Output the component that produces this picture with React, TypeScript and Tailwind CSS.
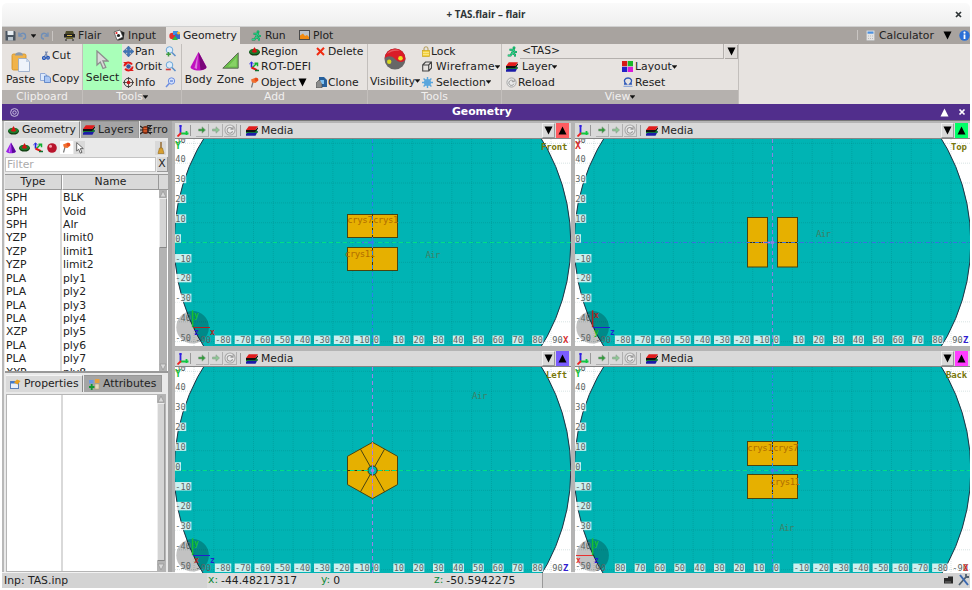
import React from "react";

type Kids = { children?: React.ReactNode };

/* ---------- icons ---------- */

function Svg({ w, h, vb, children }: Kids & { w: number; h: number; vb?: string }) {
  return (
    <svg width={w} height={h} viewBox={vb ?? `0 0 ${w} ${h}`} className="block shrink-0">
      {children}
    </svg>
  );
}

const Save = () => (
  <Svg w={11} h={11}>
    <path d="M.5 1h9l1 1v8.500h-10z" fill="#4a5560" />
    <rect x="2.500" y="1" width="6" height="4" fill="#e8eef2" />
    <rect x="3" y="7" width="5" height="3.500" fill="#b9c4cc" />
  </Svg>
);
const Undo = ({ flip = false }: { flip?: boolean }) => (
  <Svg w={9} h={9}>
    <g transform={flip ? "translate(9 0) scale(-1 1)" : undefined} fill="none" stroke="#6f8fb8" strokeWidth="1.400">
      <path d="M1.500 4.500C3 1.500 7 1.500 7.500 4.500S6 8 5 8" />
      <path d="M1 1.500v3.500h3.500" />
    </g>
  </Svg>
);
const Caret = () => (
  <Svg w={5} h={4}>
    <path d="M0 .5h5L2.500 3.500z" fill="#111" stroke="#111" strokeWidth=".4" />
  </Svg>
);
const Tri = ({ up = false, color = "#000" }: { up?: boolean; color?: string }) => (
  <Svg w={9} h={9}>
    <path d={up ? "M4.500 .5L8.500 8.500H.5z" : "M.5 .5h8L4.500 8.500z"} fill={color} />
  </Svg>
);
const FlairIcon = () => (
  <Svg w={11} h={11}>
    <path d="M2 1h7l1 3H1z" fill="#4d4a2a" />
    <rect x="0" y="4" width="11" height="3.500" fill="#222" />
    <rect x="2" y="7" width="7" height="2" fill="#6b6632" />
    <path d="M2 9v2M9 9v2" stroke="#222" />
    <path d="M3 5.500h5" stroke="#d8b84a" />
  </Svg>
);
const InputIcon = () => (
  <Svg w={12} h={12}>
    <path d="M8 2l3.500 1.500-1 7-6 1" fill="#222" />
    <path d="M1 3l6-2 3 7-6 3z" fill="#fff" stroke="#444" strokeWidth=".7" />
    <circle cx="3.500" cy="4" r="1.100" fill="#e02020" />
    <circle cx="5.500" cy="6.500" r="1.600" fill="#222" />
  </Svg>
);
const GeoIcon = () => (
  <Svg w={12} h={11}>
    <circle cx="3.500" cy="6" r="3.200" fill="#e23030" />
    <path d="M4 1h5v4H4z" fill="#3b8fe8" />
    <path d="M6 4h5v5H6z" fill="#3a67c8" />
    <path d="M3 10l3-4 3 4z" fill="#2fbf3a" />
    <circle cx="9.500" cy="3" r="1.500" fill="#f4b62c" />
  </Svg>
);
const RunIcon = () => (
  <Svg w={11} h={11}>
    <circle cx="7" cy="1.800" r="1.500" fill="#17b56c" />
    <path d="M2.500 3.800h4L5 7l3 1.500v2M5 7L3.500 9.500H.8M6.500 4l1.500 2h2" fill="none" stroke="#128a52" strokeWidth="2" />
    <path d="M2.500 3.800h4L5 7l3 1.500v2M5 7L3.500 9.500H.8M6.500 4l1.500 2h2" fill="none" stroke="#2bd488" strokeWidth="1.100" />
  </Svg>
);
const PlotIcon = () => (
  <Svg w={11} h={10}>
    <rect x=".5" y=".5" width="10" height="9" fill="#b9c2cb" stroke="#4a4a4a" />
    <path d="M1 9V5.500l3-2 2 2.500 2-1 2 2V9z" fill="#f08a10" />
  </Svg>
);
const CalcIcon = () => (
  <Svg w={9} h={11}>
    <rect x=".5" y=".5" width="8" height="10" rx="1" fill="#e4e4e4" stroke="#bcbcbc" />
    <rect x="1.500" y="1.500" width="6" height="2.200" fill="#4a90e0" />
    <path d="M2 6h5M2 8.500h5" stroke="#bbb" strokeDasharray="1 1" />
  </Svg>
);
const InfoBall = () => (
  <Svg w={11} h={11}>
    <circle cx="5.500" cy="5.500" r="5.200" fill="#2b6fd6" />
    <path d="M5.500 4.500v4.500" stroke="#fff" strokeWidth="1.800" />
    <circle cx="5.500" cy="2.700" r="1.100" fill="#fff" />
  </Svg>
);
const PasteIcon = () => (
  <Svg w={19} h={21}>
    <rect x="1" y="3" width="14" height="16" rx="1.500" fill="#f0b34a" stroke="#d08e20" strokeWidth=".8" />
    <path d="M4 4.500c0-4.500 8-4.500 8 0z" fill="#8a99ab" />
    <path d="M7.500 7.500h8L18.500 11v9.500h-11z" fill="#eef3fa" stroke="#8fa6c6" strokeWidth=".8" />
    <path d="M15 7.500V11h3.500" fill="#c3d2e8" />
  </Svg>
);
const CutIcon = () => (
  <Svg w={8} h={9}>
    <path d="M2 6L5.500 .5M5.500 6.500L3.500 .5" stroke="#7a8cb0" strokeWidth="1.300" />
    <circle cx="2" cy="7" r="1.400" fill="none" stroke="#2456b8" strokeWidth="1.400" />
    <circle cx="6" cy="6.800" r="1.300" fill="none" stroke="#2456b8" strokeWidth="1.400" />
  </Svg>
);
const CopyIcon = () => (
  <Svg w={11} h={10}>
    <path d="M.5 .5h4.500l1.500 1.500v5.500h-6z" fill="#dbe8fb" stroke="#7c9bd0" strokeWidth=".8" />
    <path d="M4.500 3h4l2 2v4.500h-6z" fill="#a9c6f4" stroke="#4f78c0" strokeWidth=".8" />
  </Svg>
);
const Cursor = ({ w = 13, h = 20, fill = "#d9d9d9", stroke = "#8d8d8d" }: { w?: number; h?: number; fill?: string; stroke?: string }) => (
  <Svg w={w} h={h} vb="0 0 13 20">
    <path d="M1 1v14l3.300-3 2.700 6.500 2.800-1.200L7 11h5z" fill={fill} stroke={stroke} strokeWidth="1.300" />
  </Svg>
);
const PanIcon = () => (
  <Svg w={11} h={11}>
    <path d="M5.500 0L8 2.800H6.500v1.700h1.700V3L11 5.500 8.200 8V6.500H6.500v1.700H8L5.500 11 3 8.200h1.500V6.500H2.800V8L0 5.500 2.800 3v1.500h1.700V2.800H3z" fill="#3f74b8" stroke="#24518c" strokeWidth=".4" />
  </Svg>
);
const OrbitIcon = () => (
  <Svg w={11} h={11}>
    <circle cx="5.500" cy="5.500" r="4" fill="none" stroke="#e01818" strokeWidth="2" strokeDasharray="10 2.500" />
    <circle cx="5.500" cy="5.500" r="2.200" fill="#34539c" />
    <path d="M0 1h4v3zM11 10H7V7z" fill="#e01818" />
  </Svg>
);
const InfoIcon = () => (
  <Svg w={11} h={11}>
    <circle cx="5.500" cy="5.500" r="4.300" fill="none" stroke="#333" strokeWidth="1" />
    <path d="M5.500 0v11M0 5.500h11" stroke="#333" strokeWidth=".8" />
    <circle cx="5.500" cy="5.500" r="1.800" fill="#c01818" />
  </Svg>
);
const Mag = ({ mark }: { mark: "plus" | "minus" | "fit" }) => (
  <Svg w={11} h={11}>
    {mark === "fit" ? (
      <>
        <circle cx="6.500" cy="4" r="3.200" fill="#d4e1fb" stroke="#6d8ee0" />
        <path d="M4.200 6.500L1 10M5 4h3" stroke="#6d8ee0" strokeWidth="1.500" />
      </>
    ) : (
      <>
        <circle cx="4.500" cy="4" r="3.300" fill="#dcecfb" stroke="#6ba6d8" />
        <path d="M7 6.500l3.500 3.500" stroke="#5a8ec8" strokeWidth="1.500" />
        {mark === "plus" ? (
          <path d="M3.500 6v4.500M1.200 8.300h4.600" stroke="#3f9a3f" strokeWidth="1.500" />
        ) : (
          <path d="M.8 8.500h5" stroke="#d04040" strokeWidth="1.600" />
        )}
      </>
    )}
  </Svg>
);
const Cone = ({ w, h, a, b }: { w: number; h: number; a: string; b: string }) => (
  <Svg w={w} h={h} vb="0 0 17 19">
    <path d="M8.500 0L.5 15c0 4.600 16 4.600 16 0z" fill={a} />
    <path d="M8.500 0l2 18c3.500-.3 6-1.300 6-3z" fill={b} />
    <path d="M8 2L4.500 16l2.500 1z" fill="#fff" opacity=".45" />
  </Svg>
);
const ZoneIcon = () => (
  <Svg w={17} h={17}>
    <path d="M.8 16.200L16.200 .8v15.400z" fill="#6cc04a" stroke="#5d6b57" strokeWidth="1" />
    <path d="M6 14.500l8.500-9v9z" fill="#9ade78" opacity=".6" />
  </Svg>
);
const RegionIcon = ({ w = 11 }: { w?: number }) => (
  <Svg w={w} h={9} vb="0 0 11 9">
    <ellipse cx="5.500" cy="5.300" rx="5.400" ry="3.300" fill="#123f12" />
    <ellipse cx="5.500" cy="4.500" rx="5.200" ry="2.800" fill="#1d7a2c" />
    <path d="M5.500 0L3 4.500c0 1.500 5 1.500 5 0z" fill="#d21414" />
  </Svg>
);
const RotIcon = () => (
  <Svg w={11} h={11}>
    <path d="M2.500 1v5.500" stroke="#2020e0" strokeWidth="1.600" />
    <path d="M3.500 6.500l4-4M5.500 2.200h3v3" stroke="#10b030" strokeWidth="1.500" fill="none" />
    <path d="M2.500 6.500L8 9.200" stroke="#e01818" strokeWidth="2" />
    <path d="M.3 3l2.200-2L4.700 3" stroke="#4040e0" fill="none" />
    <path d="M6 9.500h4" stroke="#107030" strokeWidth="1.500" />
  </Svg>
);
const PinIcon = () => (
  <Svg w={9} h={11}>
    <path d="M3 5L1.500 10.500" stroke="#777" strokeWidth="1.200" />
    <path d="M1 2.500l5-2 2.500 3-3 2.500L2 5.500z" fill="#f07030" />
    <circle cx="6.500" cy="2.500" r="1.800" fill="#e84a1a" />
  </Svg>
);
const DeleteIcon = () => (
  <Svg w={9} h={9}>
    <path d="M1 1l7 7M8 .8L1 8" stroke="#f02a10" strokeWidth="2" />
  </Svg>
);
const CloneIcon = () => (
  <Svg w={11} h={11}>
    <path d="M3 0h5l3 3v7H3z" fill="#27609c" />
    <path d="M0 6l3-3 3 1.500V11H0z" fill="#8b8b8b" stroke="#444" strokeWidth=".6" />
    <path d="M4 3h4v4H6z" fill="#7fc0f0" />
  </Svg>
);
const SphereYY = () => (
  <Svg w={22} h={22}>
    <circle cx="11" cy="11" r="10.500" fill="#676767" />
    <path d="M.5 11a10.500 10.500 0 0 1 21 0c-1.500 4-7 4-10.500 0S2 8 .5 11z" fill="#da1c28" />
    <path d="M3 6c2-4 8-6 13-3-4-1-9 0-13 3z" fill="#f59a9a" opacity=".5" />
    <circle cx="16.500" cy="10.300" r="2.300" fill="#f0e020" />
    <circle cx="5.200" cy="13.800" r="2.200" fill="#d8d820" />
  </Svg>
);
const LockIcon = () => (
  <Svg w={8} h={11}>
    <path d="M2 5V3c0-3 4-3 4 0v2" fill="none" stroke="#b9a56a" strokeWidth="1.200" />
    <rect x=".5" y="4.500" width="7" height="6" fill="#f4d23c" stroke="#caa520" strokeWidth=".7" />
    <path d="M1 6.500h6M1 8.500h6" stroke="#fbeea0" strokeWidth=".7" />
  </Svg>
);
const WireIcon = () => (
  <Svg w={10} h={11}>
    <path d="M.7 4h6v6h-6zM.7 4L3.500 1h6L6.700 4M9.500 1v6l-2.800 3" fill="none" stroke="#444" strokeWidth="1.100" />
  </Svg>
);
const SelIcon = () => (
  <Svg w={11} h={11}>
    <circle cx="5.500" cy="5.500" r="3.600" fill="#5eacdf" />
    <path d="M5.500 0v11M0 5.500h11M1.600 1.600l7.800 7.800M9.400 1.600L1.600 9.400" stroke="#5aa5dc" strokeWidth="1.400" />
  </Svg>
);
const LayersIcon = () => (
  <Svg w={12} h={10}>
    <path d="M2.500 5h9.500L9.500 9.800H0V8z" fill="#1c1ca8" />
    <path d="M2 6.800h10l-1.500-3H2L0 5.500v2z" fill="#0f8a20" />
    <path d="M0 4h9l3-2.800v1.600L9 6H0z" fill="#111" />
    <path d="M2.800 .3H12L9.300 4H0z" fill="#e01c1c" />
  </Svg>
);
const LayoutIcon = () => (
  <Svg w={11} h={11}>
    <rect width="5.200" height="5.200" fill="#d81818" />
    <rect x="5.800" width="5.200" height="5.200" fill="#18b828" />
    <rect y="5.800" width="5.200" height="5.200" fill="#2020c8" />
    <rect x="5.800" y="5.800" width="5.200" height="5.200" fill="#d818d8" />
  </Svg>
);
const ReloadIcon = ({ w = 11 }: { w?: number }) => (
  <Svg w={w} h={w} vb="0 0 11 11">
    <circle cx="5.500" cy="5.500" r="4.600" fill="#e9e9e9" stroke="#a8a8a8" strokeWidth="1" />
    <path d="M7.500 4.200A2.600 2.600 0 1 0 7.900 6.700M8.300 2.300V4.700H5.900" fill="none" stroke="#999" strokeWidth="1" />
  </Svg>
);
const ResetIcon = () => (
  <Svg w={10} h={10}>
    <path d="M1 7h2.200C-.5 3.500 2.500 1 5 1s5.500 2.500 1.800 6H9" fill="none" stroke="#2c57b8" strokeWidth="1.300" />
    <path d="M.5 9.300h9" stroke="#7e9bd8" strokeWidth="1" />
  </Svg>
);
const AxesIcon = () => (
  <Svg w={12} h={12}>
    <path d="M3.500 0v8" stroke="#3020e0" strokeWidth="1.800" />
    <path d="M3 8.500h8.500M9.500 6v4" stroke="#10c840" strokeWidth="1.800" />
    <path d="M4 8L.5 11.500" stroke="#f02020" strokeWidth="1.800" />
    <path d="M2 1h3" stroke="#3020e0" />
  </Svg>
);
const Arrow = ({ color }: { color: string }) => (
  <Svg w={8} h={8}>
    <path d="M.5 3h3.500V.8L7.500 4 4 7.200V5H.5z" fill={color} stroke="#8f9f8f" strokeWidth=".6" />
  </Svg>
);
const BallIcon = () => (
  <Svg w={10} h={10}>
    <circle cx="5" cy="5" r="4.800" fill="#b8142c" />
    <circle cx="3.500" cy="3.200" r="1.500" fill="#f3a0ac" />
  </Svg>
);
const Broom = () => (
  <Svg w={8} h={12}>
    <path d="M4 0v6" stroke="#8a5a18" strokeWidth="1.300" />
    <path d="M2.500 6h3L7 11.500H1z" fill="#d8a030" stroke="#96691a" strokeWidth=".6" />
  </Svg>
);
const ErrIcon = () => (
  <Svg w={11} h={10}>
    <ellipse cx="5.500" cy="5" rx="3.400" ry="4" fill="#7b2f14" />
    <path d="M0 1l3 2M0 5h3M0 9l3-2M11 1L8 3M11 5H8M11 9L8 7" stroke="#222" strokeWidth="1.200" />
    <path d="M3.500 3.500h4M3.500 6h4" stroke="#e8602a" strokeWidth="1.500" />
  </Svg>
);
const PropIcon = () => (
  <Svg w={11} h={10}>
    <rect x=".5" y="2.500" width="8" height="7" fill="#e8f0fa" stroke="#5a7fb8" />
    <path d="M1 3.500h7" stroke="#3a78d0" strokeWidth="2" />
    <path d="M4 3.500L7 .5l3.500 1.500-3 3.500z" fill="#e8a020" />
  </Svg>
);
const AttrIcon = () => (
  <Svg w={11} h={11}>
    <rect x="0" y="1" width="4.500" height="3.500" fill="#6e9ae0" />
    <rect x="6" y="0" width="4.500" height="4" fill="#e8a040" />
    <rect x="6" y="5" width="4" height="5" fill="#e4d8c0" stroke="#b89a60" strokeWidth=".5" />
    <path d="M2.700 5v6M0 8h5.400" stroke="#129a30" strokeWidth="1.800" />
  </Svg>
);

/* ---------- ribbon ---------- */

function Label({ children }: Kids) {
  return <span className="pt-[1.500px] leading-none whitespace-pre">{children}</span>;
}

function Group({ title, caret, width, children }: Kids & { title: string; caret?: boolean; width: string }) {
  return (
    <div className={`flex shrink-0 flex-col border-r border-[#c3bfbc] ${width}`}>
      <div className="flex h-[46px]">{children}</div>
      <div className="flex h-[14px] items-center justify-center bg-[#b5b1ae] text-[#f1efee]">
        <Label>{title}</Label>
        {caret && <Caret />}
      </div>
    </div>
  );
}

function Item({ icon, text, caret, slot, h = "h-[15.500px]" }: { icon: React.ReactNode; text: React.ReactNode; caret?: boolean; slot: string; h?: string }) {
  return (
    <div className={`flex items-center ${h}`}>
      <div className={`flex shrink-0 items-center ${slot}`}>{icon}</div>
      <Label>{text}</Label>
      {caret && <Caret />}
    </div>
  );
}

function MenuBar() {
  return (
    <div className="flex h-[17px] items-center bg-[#a8a39f]">
      <div className="flex w-[52px] items-center pl-[3px]">
        <Save />
        <div className="ml-[2px] flex items-center gap-[4px]">
          <Undo />
          <Caret />
          <Undo flip />
        </div>
        <div className="ml-[3px] h-[10px] w-px bg-[#c9c5c2]" />
      </div>
      <div className="flex w-[49px] items-center gap-[3px] pl-[10px]"><FlairIcon /><Label>Flair</Label></div>
      <div className="flex w-[63px] items-center gap-[3px] pl-[10px]"><InputIcon /><Label>Input</Label></div>
      <div className="flex h-full w-[74px] items-center gap-[2px] bg-[#e7e3e0] pl-[3px]"><GeoIcon /><Label>Geometry</Label></div>
      <div className="flex w-[48px] items-center gap-[3px] pl-[11px]"><RunIcon /><Label>Run</Label></div>
      <div className="flex w-[60px] items-center gap-[3px] pl-[11px]"><PlotIcon /><Label>Plot</Label></div>
      <div className="ml-auto flex items-center">
        <div className="mr-[8px] h-[10px] w-px bg-[#c9c5c2]" />
        <CalcIcon />
        <div className="ml-[4px] flex w-[64px]"><Label>Calculator</Label></div>
        <Tri />
        <div className="ml-[7px]"><InfoBall /></div>
      </div>
    </div>
  );
}

function Ribbon() {
  return (
    <div className="flex h-[60px] bg-[#e7e3e0]">
      <Group title="Clipboard" width="w-[81px]">
        <div className="flex w-[37px] flex-col items-center pt-[7px]">
          <PasteIcon />
          <div className="mt-[1px] flex"><Label>Paste</Label></div>
        </div>
        <div className="flex flex-col pl-[1px]">
          <Item icon={<div className="pl-[2px]"><CutIcon /></div>} text="Cut" slot="w-[12px]" h="h-[23px]" />
          <Item icon={<CopyIcon />} text="Copy" slot="w-[12px]" h="h-[24px]" />
        </div>
      </Group>
      <Group title="Tools" caret width="w-[99px]">
        <div className="flex w-[39px] flex-col items-center bg-[#a9ffb9] pt-[6px]">
          <Cursor />
          <div className="mt-[1px] flex"><Label>Select</Label></div>
        </div>
        <div className="flex w-[43px] flex-col pl-[1px]">
          <Item icon={<PanIcon />} text="Pan" slot="w-[12px]" />
          <Item icon={<OrbitIcon />} text="Orbit" slot="w-[12px]" />
          <Item icon={<InfoIcon />} text="Info" slot="w-[12px]" />
        </div>
        <div className="flex flex-col justify-around">
          <Mag mark="plus" />
          <Mag mark="minus" />
          <Mag mark="fit" />
        </div>
      </Group>
      <Group title="Add" width="w-[186px]">
        <div className="flex w-[33px] flex-col items-center pt-[8px]">
          <Cone w={17} h={19} a="#c010c0" b="#7a067a" />
          <div className="mt-[2px] flex"><Label>Body</Label></div>
        </div>
        <div className="flex w-[31px] flex-col items-center pt-[8px]">
          <ZoneIcon />
          <div className="mt-[4px] flex"><Label>Zone</Label></div>
        </div>
        <div className="flex w-[69px] flex-col pl-[3px]">
          <Item icon={<RegionIcon />} text="Region" slot="w-[12px]" />
          <Item icon={<RotIcon />} text="ROT-DEFI" slot="w-[12px]" />
          <div className="flex items-center gap-[2px]">
            <Item icon={<div className="pl-[1px]"><PinIcon /></div>} text="Object" slot="w-[12px]" />
            <Tri />
          </div>
        </div>
        <div className="flex flex-col pl-[1px]">
          <Item icon={<DeleteIcon />} text="Delete" slot="w-[12px]" />
          <div className="h-[15.500px]" />
          <Item icon={<CloneIcon />} text="Clone" slot="w-[12px]" />
        </div>
      </Group>
      <Group title="Tools" width="w-[134px]">
        <div className="flex w-[54px] flex-col items-center pt-[4px]">
          <SphereYY />
          <div className="mt-[5px] flex items-center"><Label>Visibility</Label><Caret /></div>
        </div>
        <div className="flex flex-col">
          <Item icon={<LockIcon />} text="Lock" slot="w-[9px]" />
          <Item icon={<WireIcon />} text={<span className="tracking-[0.300px]">Wireframe</span>} caret slot="w-[14px]" />
          <Item icon={<SelIcon />} text="Selection" caret slot="w-[14px]" />
        </div>
      </Group>
      <Group title="View" caret width="w-[237px]">
        <div className="flex w-full flex-col pl-[4px]">
          <div className="flex h-[15.500px] items-center">
            <div className="w-[14px] pl-[1px]"><RunIcon /></div>
            <div className="flex h-[15px] grow items-center border-r border-b border-[#b4b0ad] pl-[2px]"><Label>&lt;TAS&gt;</Label></div>
            <div className="ml-[1px] flex h-[14px] w-[13px] items-center justify-center border-r border-b border-[#aaa6a3] bg-[#e0dcd9]"><Tri /></div>
          </div>
          <div className="flex">
            <div className="w-[116px]"><Item icon={<LayersIcon />} text="Layer" caret slot="w-[16px]" /></div>
            <Item icon={<LayoutIcon />} text="Layout" caret slot="w-[13px]" />
          </div>
          <div className="flex">
            <div className="w-[117px]"><Item icon={<ReloadIcon />} text="Reload" slot="w-[12px]" /></div>
            <Item icon={<ResetIcon />} text="Reset" slot="w-[12px]" />
          </div>
        </div>
      </Group>
    </div>
  );
}

/* ---------- left panel ---------- */

const bodies: [string, string][] = [
  ["SPH", "BLK"], ["SPH", "Void"], ["SPH", "AIr"], ["YZP", "limit0"], ["YZP", "limit1"],
  ["YZP", "limit2"], ["PLA", "ply1"], ["PLA", "ply2"], ["PLA", "ply3"], ["PLA", "ply4"],
  ["XZP", "ply5"], ["PLA", "ply6"], ["PLA", "ply7"], ["XYP", "ply8"],
];

function ScrollBar({ thumb }: { thumb: string }) {
  return (
    <div className="flex w-[8px] shrink-0 flex-col items-center bg-[#b3b3b3]">
      <Svg w={8} h={8}><path d="M4 1l3 6H1z" fill="#d9d9d9" stroke="#999" strokeWidth=".8" /></Svg>
      <div className={`w-full border border-t-[#eee] border-r-[#999] border-b-[#888] border-l-[#eee] bg-[#d4d4d4] ${thumb}`} />
      <div className="mt-auto"><Svg w={8} h={8}><path d="M1 1h6L4 7z" fill="#d9d9d9" stroke="#999" strokeWidth=".8" /></Svg></div>
    </div>
  );
}

function Tab({ icon, text, active, width }: { icon: React.ReactNode; text: string; active?: boolean; width: string }) {
  return (
    <div className={`flex h-full shrink-0 items-center gap-[3px] border-t border-r pl-[2px] ${width} ${active ? "border-t-[#f4f4f4] border-r-[#8a8a8a] bg-[#d9d9d9]" : "border-[#989898] bg-[#a5a5a5]"}`}>
      {icon}
      <Label>{text}</Label>
    </div>
  );
}

function SidePanel() {
  return (
    <div className="flex w-[170px] shrink-0 flex-col border-r-[4px] border-l-2 border-r-[#a5a5a5] border-l-[#b8b8b8] bg-[#e9e9e9] pl-[1px]">
      <div className="flex h-[17px] gap-[1px]">
        <Tab icon={<div className="ml-[1px]"><RegionIcon /></div>} text="Geometry" active width="w-[75px]" />
        <Tab icon={<LayersIcon />} text="Layers" width="w-[58px]" />
        <div className="flex w-[28px] items-center bg-[#a5a5a5]">
          <ErrIcon />
          <div className="-ml-[5px] flex"><Label>Erro</Label></div>
        </div>
      </div>
      <div className="flex h-[19px] items-center gap-[3px] pl-[1px]">
        <Cone w={10} h={12} a="#9c20e8" b="#5a0a98" />
        <RegionIcon />
        <RotIcon />
        <BallIcon />
        <div className="flex h-[13px] w-[13px] items-center justify-center bg-white"><PinIcon /></div>
        <div className="-ml-[2px] flex h-[13px] w-[11px] items-center justify-center bg-[#d9d9d9]"><Cursor w={8} h={12} fill="#fff" stroke="#444" /></div>
        <div className="mr-[2px] ml-auto flex h-[14px] w-[11px] items-center justify-center bg-[#d9d9d9]"><Broom /></div>
      </div>
      <div className="flex h-[15px]">
        <div className="flex w-[151px] items-center border border-[#c4c4c4] bg-white pl-[1px] text-[#ababab]"><Label>Filter</Label></div>
        <div className="ml-[1px] flex w-[11px] items-center justify-center border-r border-b border-[#999] bg-[#d9d9d9]"><Label>X</Label></div>
      </div>
      <div className="mt-[2px] flex h-[199px] flex-col overflow-hidden border-t border-b-2 border-t-[#999] border-b-[#999] bg-white">
        <div className="flex h-[15px] shrink-0 bg-[#d9d9d9]">
          <div className="flex w-[57px] items-center justify-center border-r border-b border-[#999]"><Label>Type</Label></div>
          <div className="flex w-[97px] items-center justify-center border-r border-b border-l border-[#999] border-l-white"><Label>Name</Label></div>
          <div className="w-[9px] border-b border-[#999]" />
        </div>
        <div className="flex min-h-0 grow">
          <div className="w-[57px] shrink-0 border-r-2 border-[#d9d9d9] pt-[1px] pl-[1px]">
            {bodies.map(([t], i) => <div key={i} className="flex h-[13.450px] items-center"><Label>{t}</Label></div>)}
          </div>
          <div className="w-[97px] shrink-0 pt-[1px] pl-[1px]">
            {bodies.map(([, n], i) => <div key={i} className="flex h-[13.450px] items-center"><Label>{n}</Label></div>)}
          </div>
          <ScrollBar thumb="h-[50px]" />
        </div>
      </div>
      <div className="mt-[2px] flex h-[17px] gap-[1px] pl-[1px]">
        <Tab icon={<div className="pl-[2px]"><PropIcon /></div>} text="Properties" active width="w-[77px]" />
        <Tab icon={<div className="pl-[3px]"><AttrIcon /></div>} text="Attributes" width="w-[78px]" />
      </div>
      <div className="mt-[2px] mr-[2px] ml-[1px] flex h-[178px] border border-[#b5b5b5] bg-white">
        <div className="w-[56px] border-r-2 border-[#d9d9d9]" />
        <div className="grow" />
        <ScrollBar thumb="h-[158px]" />
      </div>
    </div>
  );
}

/* ---------- geometry views ---------- */

const CX = 197.5;
const CY = 103.5;
const STEP = 19.83;

type Note = { x: number; y: number; s: string; w: number };
type ViewProps = {
  name: string;
  nameX: number;
  button: string;
  hAxis: string;
  hDash: string;
  vAxis: string;
  vDash: string;
  yLetter: [string, string];
  xLetter: [string, string];
  reversed?: boolean;
  notes: Note[];
  gizmo: React.ReactNode;
  children: React.ReactNode;
};

function Tick({ x, y, value, plain }: { x: number; y: number; value: number; plain?: boolean }) {
  const s = String(value);
  const w = s.length * 5.2;
  return (
    <g>
      {!plain && <rect x={x} y={y - 7.5} width={w + 0.8} height={8.5} fill="#fff" opacity=".8" />}
      <text x={x + 0.3} y={y} textLength={w} fontSize="8.600" fill="#5a6464">{s}</text>
    </g>
  );
}

function View(p: ViewProps) {
  const cols = [-9, -8, -7, -6, -5, -4, -3, -2, -1, 0, 1, 2, 3, 4, 5, 6, 7, 8, 9];
  const rows = [-5, -4, -3, -2, -1, 0, 1, 2, 3, 4, 5];
  return (
    <div className="flex h-full min-w-0 flex-col bg-white">
      <div className="flex h-[16px] shrink-0 items-center border-b border-[#858585] bg-[#d9d9d9] pl-[2px]">
        <AxesIcon />
        <div className="ml-[1px] h-[11px] w-px bg-[#999]" />
        <div className="ml-[5px] flex h-[13px] w-[13px] items-center justify-center border-r border-b border-[#b0b0b0]"><Arrow color="#2f9a3a" /></div>
        <div className="ml-[1px] flex h-[13px] w-[13px] items-center justify-center border-r border-b border-[#b0b0b0]"><Arrow color="#8cc795" /></div>
        <div className="ml-[1px] flex h-[13px] w-[13px] items-center justify-center border-r border-b border-[#b0b0b0]"><ReloadIcon w={12} /></div>
        <div className="ml-[3px] h-[11px] w-px bg-[#999]" />
        <div className="mr-[3px] ml-[5px]"><LayersIcon /></div>
        <Label>Media</Label>
        <div className="ml-auto flex h-[15px] w-[13px] items-center justify-center border border-[#f0f0f0] border-r-[#999] border-b-[#999]"><Tri /></div>
        <div className={`mr-[2px] ml-[1px] flex h-[15px] w-[13px] items-center justify-center ${p.button}`}><Tri up /></div>
      </div>
      <svg className="block w-full grow" height="206" fontFamily="'DejaVu Sans Mono', monospace">
        <circle cx={CX} cy={CY} r="198.300" fill="#00b4b4" stroke="#234" strokeWidth="1" />
        <g stroke="#004a4a" strokeOpacity=".16" strokeWidth="1" strokeDasharray="1 1">
          {cols.map((c) => <path key={`c${c}`} d={`M${CX + c * STEP} 0V207`} />)}
          {rows.map((r) => <path key={`r${r}`} d={`M0 ${CY - r * STEP}H396`} />)}
        </g>
        {p.children}
        <g fontSize="9">
          {p.notes.map((n, i) => (
            <text key={i} x={n.x} y={n.y} textLength={n.w} fill={n.s === "Air" ? "#3f7f64" : "#b06c00"}>{n.s}</text>
          ))}
        </g>
        <path d={`M0 ${CY}H396`} stroke={p.hAxis} strokeDasharray={p.hDash} />
        <path d={`M${CX} 0V207`} stroke={p.vAxis} strokeDasharray={p.vDash} />
        <circle cx={CX} cy={CY} r="1.800" fill={p.vAxis} />
        <circle cx="17.600" cy="188.300" r="16.300" fill="#000" opacity=".24" />
        {rows.map((r) => <Tick key={r} x={0} y={CY - r * STEP - 0.8} value={r * 10} plain={r === -5 || r === -4 || r > 3} />)}
        {cols.map((c) => (
          <Tick key={c} x={CX + c * STEP + 1} y={204} value={(p.reversed ? -c : c) * 10} plain={Math.abs(c) === 9} />
        ))}
        {p.gizmo}
        <text x="0" y="9.500" fontSize="10" fontWeight="bold" fill={p.yLetter[1]}>{p.yLetter[0]}</text>
        <text x="388" y="204" fontSize="9" fontWeight="bold" fill={p.xLetter[1]}>{p.xLetter[0]}</text>
        <text x={p.nameX} y="10.500" fontSize="9" fontWeight="bold" fill="#77770a" textLength={p.name.length * 5.3}>{p.name}</text>
      </svg>
    </div>
  );
}

const block = { fill: "#e6b000", stroke: "#4a4410", strokeWidth: 1 };

function Gizmo({ hor, ver, dot, labels, left }: { hor: string; ver: string; dot: string; labels: [string, string, string]; left?: boolean }) {
  return (
    <g strokeWidth="1" fontSize="8" fontWeight="bold">
      <path d={left ? "M18 188.500H1" : "M18 188.500h17"} stroke={hor} />
      <path d="M17.600 188.300v-17" stroke={ver} strokeWidth="1.500" />
      <text x={left ? 1 : 35} y="196" fill={hor}>{labels[0]}</text>
      <text x="19" y="179" fill={ver}>{labels[1]}</text>
      <text x="19" y="196" fill={dot}>{labels[2]}</text>
    </g>
  );
}

function Views() {
  return (
    <div className="grid grow grid-cols-[396px_395px] grid-rows-[223px_222px] gap-x-[4px] gap-y-[5px] bg-[#b4b4b4] pt-[2px] pl-[3px]">
      <View
        name="Front" nameX={366} button="bg-[#ff5c60]"
        hAxis="#00df86" hDash="4 3" vAxis="#2d80ee" vDash="4 3"
        yLetter={["Y", "#18c040"]} xLetter={["X", "#d83030"]}
        notes={[{ x: 172.3, y: 84, s: "crys7", w: 25.5 }, { x: 198, y: 84, s: "crys1", w: 25.5 }, { x: 170, y: 118, s: "crys11", w: 30 }, { x: 250.5, y: 118.5, s: "Air", w: 15 }]}
        gizmo={<Gizmo hor="#b02020" ver="#18c030" dot="#2020d0" labels={["x", "y", "z"]} />}
      >
        <rect x="172.500" y="75.500" width="50" height="23" {...block} />
        <rect x="172.500" y="108.500" width="50" height="23" {...block} />
        <path d={`M${CX} 75v23M${CX} 108v23`} stroke="#3c3510" strokeDasharray="5 2" />
        <path d={`M187 ${CY}h10`} stroke="#5068f0" strokeWidth="1.500" />
      </View>
      <View
        name="Top" nameX={376} button="bg-[#00ff66]"
        hAxis="#3a72e0" hDash="4 2 1 2" vAxis="#8a80e4" vDash="4 3"
        yLetter={["X", "#d83030"]} xLetter={["Z", "#3020d0"]}
        notes={[{ x: 241, y: 97.5, s: "Air", w: 15 }]}
        gizmo={<Gizmo hor="#2020d0" ver="#b02020" dot="#18b830" labels={["z", "x", "y"]} />}
      >
        <rect x="172.500" y="78.500" width="20" height="49.500" {...block} />
        <rect x="202.500" y="78.500" width="20" height="49.500" {...block} />
        <path d={`M172.500 ${CY}h20M202.500 ${CY}h20`} stroke="#3c3510" />
        <path d={`M188 ${CY}h10`} stroke="#e060e8" strokeWidth="1.500" />
      </View>
      <View
        name="Left" nameX={371} button="bg-[#7a5cff]"
        hAxis="#00df86" hDash="4 3" vAxis="#9a80ea" vDash="4 3"
        yLetter={["Y", "#18c040"]} xLetter={["Z", "#3020d0"]}
        notes={[{ x: 297, y: 31.5, s: "Air", w: 15.5 }]}
        gizmo={<Gizmo hor="#2020d0" ver="#18c030" dot="#b02020" labels={["z", "y", "x"]} />}
      >
        <path d="M197.500 75.300l25 14v28.300l-25 14l-25-14V89.300z" {...block} />
        <path d={`M185.500 82.200L${CX} ${CY}L209.500 82.200M185.500 124.800L${CX} ${CY}L209.500 124.800`} fill="none" stroke="#4a4410" />
        <path d={`M172.500 ${CY}h20M202.500 ${CY}h20`} stroke="#3c3510" strokeDasharray="5 2" />
        <path d={`M${CX} 75v56`} stroke="#ff8070" strokeDasharray="4 3" />
        <circle cx={CX} cy={CY} r="4.600" fill="#00b4b4" stroke="#3c3510" />
      </View>
      <View
        name="Back" nameX={371} button="bg-[#ff3cff]" reversed
        hAxis="#00df86" hDash="4 3" vAxis="#3a80ee" vDash="3 2 1 2"
        yLetter={["Y", "#18c040"]} xLetter={["X", "#d83030"]}
        notes={[{ x: 172.3, y: 84, s: "crys1", w: 25.5 }, { x: 198, y: 84, s: "crys7", w: 25.5 }, { x: 195, y: 118, s: "crys11", w: 30 }, { x: 204.5, y: 163.5, s: "Air", w: 15 }]}
        gizmo={<Gizmo left hor="#e83030" ver="#18c030" dot="#2020d0" labels={["x", "y", "z"]} />}
      >
        <rect x="172.500" y="74.500" width="50" height="24" {...block} />
        <rect x="172.500" y="107.500" width="50" height="24" {...block} />
        <path d={`M${CX} 75v23M${CX} 108v23`} stroke="#3c3510" strokeDasharray="5 2" />
        <path d={`M197 ${CY}h11`} stroke="#5068f0" strokeWidth="1.500" />
      </View>
    </div>
  );
}

function StatusBar() {
  return (
    <div className="flex h-[15.500px] items-center border-t border-[#f2f2f2] bg-[#d3d3d3]">
      <div className="flex w-[205px] pl-[2px]"><Label>Inp: TAS.inp</Label></div>
      <div className="flex h-full w-[336px] items-center border-r border-[#999] bg-[#dcdcdc]">
        <div className="flex w-[114px] gap-[3px] pl-[1px]"><span className="text-[#138a3a]"><Label>x:</Label></span><Label>-44.48217317</Label></div>
        <div className="flex w-[113px] gap-[3px]"><span className="text-[#138a3a]"><Label>y:</Label></span><Label>0</Label></div>
        <div className="flex gap-[3px]"><span className="text-[#138a3a]"><Label>z:</Label></span><Label>-50.5942275</Label></div>
      </div>
      <div className="ml-auto flex items-center gap-[4px] pr-[1px]">
        <Svg w={10} h={8}><path d="M0 2h4V.5h5V7.500H0z" fill="#2a2a2a" /><path d="M1 6h6" stroke="#777" /></Svg>
        <Svg w={11} h={12}>
          <path d="M1 11l7-8M8 0v3h3" stroke="#506070" strokeWidth="1.800" fill="none" />
          <path d="M2 1l4 5M6 6l4 5" stroke="#3a68b0" strokeWidth="2" />
        </Svg>
      </div>
    </div>
  );
}

export default function App() {
  return (
    <div className="h-[590px] w-[972px] overflow-hidden bg-white pt-[3px] pr-[2px] pl-[2px] font-['DejaVu_Sans',sans-serif] text-[10.800px] leading-none text-[#222]">
      <div className="flex h-[24px] items-center rounded-t-[5px] border-b border-[#d0d0d0] bg-linear-to-b from-[#fafafa] to-[#efefef] font-['Open_Sans',sans-serif] text-[9.800px] font-bold text-[#2e3436]">
        <div className="w-[953px] pl-[15px] text-center">+ TAS.flair – flair</div>
        <Svg w={7} h={7}><path d="M1 1l5 5M6 1L1 6" stroke="#2e3436" strokeWidth="1.700" /></Svg>
      </div>
      <MenuBar />
      <Ribbon />
      <div className="flex h-[16px] items-center bg-[#512e8c] text-white">
        <div className="w-[450px] pl-[8px]">
          <Svg w={9} h={9}>
            <circle cx="4.500" cy="4.500" r="3.900" fill="none" stroke="#c9bfe0" />
            <circle cx="4.500" cy="4.500" r="1.700" fill="none" stroke="#c9bfe0" />
          </Svg>
        </div>
        <div className="flex font-bold"><Label>Geometry</Label></div>
        <div className="mr-[4px] ml-auto flex items-center gap-[9px]">
          <Tri up color="#fff" />
          <Svg w={8} h={8}><path d="M1.500 1.500l5 5M6.500 1.500l-5 5" stroke="#fff" strokeWidth="1.700" /></Svg>
        </div>
      </div>
      <div className="flex h-[452px] border-t border-[#777]">
        <SidePanel />
        <Views />
      </div>
      <StatusBar />
    </div>
  );
}
